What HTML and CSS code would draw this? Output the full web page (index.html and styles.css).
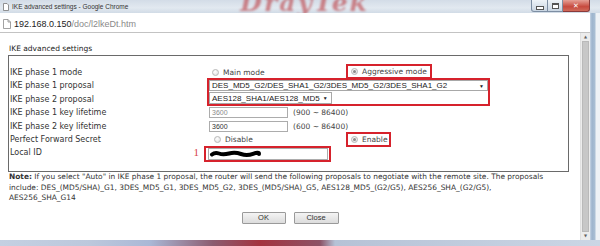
FILE: index.html
```html
<!DOCTYPE html>
<html lang="en">
<head>
  <meta charset="UTF-8">
  <title>IKE advanced settings</title>
  <link rel="stylesheet" href="styles.css">
</head>
<body>

<div class="window">

  <div class="titlebar">
    <svg class="tab-icon" width="6" height="8" viewBox="0 0 6 8"><path d="M0.5 0.5h3.5l1.5 1.5v5.5h-5z" fill="#fff" stroke="#777" stroke-width="0.8"/></svg>
    <span class="win-title">IKE advanced settings - Google Chrome</span>
    <span class="bg-logo">DrayTek</span>
    <div class="controls">
      <span class="ctl ctl-min"><i></i></span>
      <span class="ctl ctl-max"><i></i></span>
      <span class="ctl ctl-close">&#x2715;</span>
    </div>
  </div>

  <div class="addressbar">
    <svg class="page-icon" width="8" height="10" viewBox="0 0 8 10"><path d="M0.5 0.5h4.5l2.5 2.5v6.5h-7z M5 0.5v2.5h2.5" fill="#fff" stroke="#8a8a8a" stroke-width="0.8"/></svg>
    <span class="url"><b>192.168.0.150</b>/doc/l2lkeDt.htm</span>
  </div>

  <div class="client">
    <div class="page">
      <div class="heading">IKE advanced settings</div>

      <div class="ike-box">
        <div class="ike-table">
          <div class="lbl">IKE phase 1 mode</div>
          <label class="opt"><span class="radio"></span>Main mode</label>
          <label class="opt mark mark-aggr"><span class="radio on"></span>Aggressive mode</label>

          <div class="lbl">IKE phase 1 proposal</div>
          <div class="proposals mark">
            <div class="sel sel-wide">DES_MD5_G2/DES_SHA1_G2/3DES_MD5_G2/3DES_SHA1_G2<span class="arrow">&#9660;</span></div>
            <div class="sel">AES128_SHA1/AES128_MD5<span class="arrow">&#9660;</span></div>
          </div>
          <div class="lbl">IKE phase 2 proposal</div>

          <div class="lbl">IKE phase 1 key lifetime</div>
          <div class="val">
            <span class="txt dim">3600</span>
            <span class="range">(900 ~ 86400)</span>
          </div>

          <div class="lbl">IKE phase 2 key lifetime</div>
          <div class="val">
            <span class="txt">3600</span>
            <span class="range">(600 ~ 86400)</span>
          </div>

          <div class="lbl">Perfect Forward Secret</div>
          <label class="opt opt-pfs"><span class="radio"></span>Disable</label>
          <label class="opt mark mark-enable"><span class="radio on"></span>Enable</label>

          <div class="lbl lbl-local">Local ID<span class="num">1</span></div>
          <div class="val">
            <span class="mark mark-local">
              <span class="txt txt-local">
                <svg width="54" height="8" viewBox="0 0 54 8"><path d="M3 4.5 Q6 2 10 3.5 T20 3.5 T32 4 T44 3.8 T50 4" fill="none" stroke="#000" stroke-width="4" stroke-linecap="round"/></svg>
              </span>
            </span>
          </div>
        </div>
      </div>

      <p class="note"><b>Note:</b> If you select "Auto" in IKE phase 1 proposal, the router will send the following proposals to negotiate with the remote site. The proposals include: DES_(MD5/SHA)_G1, 3DES_MD5_G1, 3DES_MD5_G2, 3DES_(MD5/SHA)_G5, AES128_MD5_(G2/G5), AES256_SHA_(G2/G5),<br>AES256_SHA_G14</p>

      <div class="buttons">
        <button type="button" class="btn btn-ok">OK</button>
        <button type="button" class="btn">Close</button>
      </div>
    </div>

    <div class="scrollbar">
      <span class="sb-arrow">&#9650;</span>
      <span class="sb-thumb"></span>
      <span class="sb-arrow">&#9660;</span>
    </div>
  </div>

  <div class="bottomframe"></div>
</div>

</body>
</html>
```

FILE: styles.css
```css
body {
  margin: 0;
  font-family: "DejaVu Sans", Verdana, sans-serif;
}

.window {
  width: 600px;
  height: 246px;
  display: flex;
  flex-direction: column;
  overflow: hidden;
  background: linear-gradient(to right, #c6d4e4 590px, #9db4cd 592px, #aabfd4 595px, #eef2f6 596px);
}

/* title bar */

.titlebar {
  height: 13px;
  display: flex;
  align-items: center;
  overflow: hidden;
  background: linear-gradient(to bottom, #d3dce7, #e2e9f0 60%, #d1dbe6);
}

.tab-icon {
  margin-left: 3px;
}

.win-title {
  margin-left: 3px;
  font-family: "Liberation Sans", Arial, sans-serif;
  font-size: 6.5px;
  color: #333;
}

.bg-logo {
  margin-left: 112px;
  margin-top: -9px;
  font-family: "DejaVu Serif", serif;
  font-size: 25px;
  font-weight: bold;
  font-style: italic;
  color: rgba(185, 50, 55, 0.55);
  filter: blur(0.8px);
  letter-spacing: 2px;
}

.controls {
  margin-left: auto;
  margin-right: 10px;
  display: flex;
  align-self: flex-start;
}

.ctl {
  height: 12px;
  display: flex;
  align-items: center;
  justify-content: center;
  box-sizing: border-box;
  border: 1px solid #7d8ea3;
  border-top: none;
  background: linear-gradient(to bottom, #eef3f8, #c9d5e2);
}

.ctl-min {
  width: 17px;
  border-radius: 0 0 0 3px;
}

.ctl-min i {
  width: 6px;
  height: 2px;
  margin-top: 4px;
  background: #fff;
  border: 1px solid #555;
}

.ctl-max {
  width: 15px;
  border-left: none;
}

.ctl-max i {
  width: 5px;
  height: 3px;
  background: #fff;
  border: 1px solid #555;
  border-top-width: 2px;
}

.ctl-close {
  width: 27px;
  border-left: none;
  border-color: #8a3a3a;
  border-radius: 0 0 3px 0;
  background: linear-gradient(to bottom, #e6a096, #c74a3e 60%, #d06a5a);
  color: #fff;
  font-size: 7px;
  font-weight: bold;
}

/* address bar */

.addressbar {
  height: 19px;
  margin-right: 10px;
  display: flex;
  align-items: center;
  background: #fff;
  border-bottom: 1px solid #c3c3c3;
}

.page-icon {
  margin-left: 3px;
  margin-top: 2px;
}

.url {
  margin-left: 3px;
  margin-top: 2px;
  font-family: "Liberation Sans", Arial, sans-serif;
  font-size: 9px;
  color: #8a8a8a;
}

.url b {
  font-weight: normal;
  color: #222;
}

/* page */

.client {
  flex: 1;
  margin-right: 10px;
  display: flex;
  background: #fff;
}

.page {
  width: 581px;
  padding-top: 11px;
  color: #333;
}

.heading {
  padding-left: 9px;
  font-size: 7.5px;
  line-height: 10px;
  color: #222;
}

.ike-box {
  width: 561px;
  margin: 1px 0 0 8px;
  padding: 9.5px 0 11px 1px;
  box-sizing: border-box;
  border: 1px solid #6a6a6a;
}

.ike-table {
  display: grid;
  grid-template-columns: 199px 137px 1fr;
  grid-auto-rows: 13.5px;
  align-items: center;
  font-size: 8px;
}

.lbl {
  grid-column: 1;
  color: #333;
}

.lbl-local {
  display: flex;
  justify-content: space-between;
  padding-right: 10px;
}

.num {
  font-family: "Liberation Serif", serif;
  font-size: 11px;
  color: #d8434a;
  margin-top: -2px;
}

.opt {
  display: flex;
  align-items: center;
  gap: 4px;
  font-size: 7.5px;
  color: #444;
  padding-left: 3px;
}

.opt-pfs {
  padding-left: 5px;
}

.radio {
  width: 7px;
  height: 7px;
  box-sizing: border-box;
  border-radius: 50%;
  border: 1px solid #b8b8b8;
  background: radial-gradient(circle at 40% 35%, #fff, #dcdcdc);
  position: relative;
}

.radio.on::after {
  content: "";
  position: absolute;
  left: 1px;
  top: 1px;
  width: 3px;
  height: 3px;
  border-radius: 50%;
  background: #8a8a8a;
}

.mark {
  box-sizing: border-box;
  border: 2px solid #d6222c;
}

.mark-aggr {
  width: 86px;
  height: 15px;
  margin-top: -2px;
}

.mark-enable {
  width: 45px;
  height: 15px;
  margin-top: -1px;
}

.proposals {
  grid-column: 2 / 4;
  grid-row: span 2;
  align-self: stretch;
  width: 283px;
  height: 28px;
  margin: -1px 0 0 -2px;
  display: flex;
  flex-direction: column;
  gap: 1px;
}

.sel {
  height: 12px;
  box-sizing: border-box;
  align-self: flex-start;
  display: flex;
  align-items: center;
  padding: 0 3px 0 2px;
  border: 1px solid #a8a8a8;
  font-family: "Liberation Sans", Arial, sans-serif;
  font-size: 8px;
  color: #222;
  background: #fff;
}

.sel-wide {
  height: 11px;
  width: 279px;
  justify-content: space-between;
}

.arrow {
  font-size: 5px;
  margin-left: 3px;
  color: #222;
}

.val {
  grid-column: 2 / 4;
  display: flex;
  align-items: center;
  gap: 5px;
}

.txt {
  width: 79px;
  height: 11px;
  box-sizing: border-box;
  display: flex;
  align-items: center;
  padding-left: 2px;
  border: 1px solid #acacac;
  font-family: "Liberation Sans", Arial, sans-serif;
  font-size: 7px;
  color: #333;
}

.txt.dim {
  color: #8a8a8a;
}

.range {
  font-size: 7.5px;
  color: #444;
}

.mark-local {
  width: 127px;
  height: 16px;
  margin: 2px 0 0 -5px;
  display: flex;
  align-items: center;
  padding: 0 1px 0 2px;
}

.txt-local {
  width: 120px;
  height: 12px;
  padding-left: 0;
}

.note {
  margin: 0;
  padding: 0 8px 0 9px;
  font-size: 7.45px;
  line-height: 10.5px;
  color: #333;
}

.note b {
  font-weight: bold;
}

.buttons {
  display: flex;
  justify-content: center;
  gap: 8px;
  margin-top: 8px;
}

.btn {
  width: 45px;
  height: 12px;
  padding: 0;
  border: 1px solid #9a9a9a;
  border-radius: 1px;
  background: linear-gradient(to bottom, #f4f4f4, #dcdcdc);
  font-family: "Liberation Sans", Arial, sans-serif;
  font-size: 7.5px;
  color: #333;
}

.btn-ok {
  width: 44px;
}

/* scrollbar */

.scrollbar {
  width: 9px;
  display: flex;
  flex-direction: column;
  align-items: center;
  background: #ececec;
  border-left: 1px solid #e0e0e0;
}

.sb-arrow {
  height: 8px;
  font-size: 4px;
  line-height: 8px;
  color: #606060;
}

.sb-thumb {
  flex: 1;
  width: 7px;
  background: #c7c7c7;
  border: 1px solid #b9b9b9;
  box-sizing: border-box;
}

.bottomframe {
  height: 6px;
  background: linear-gradient(to right, #c4d0e2 0, #bcc8dc 90px, #aab8d6 150px, #8b5c70 213px, #a4333f 260px, #8c5266 320px, #b6c2d6 335px, #cbd6e5 100%);
}
```
